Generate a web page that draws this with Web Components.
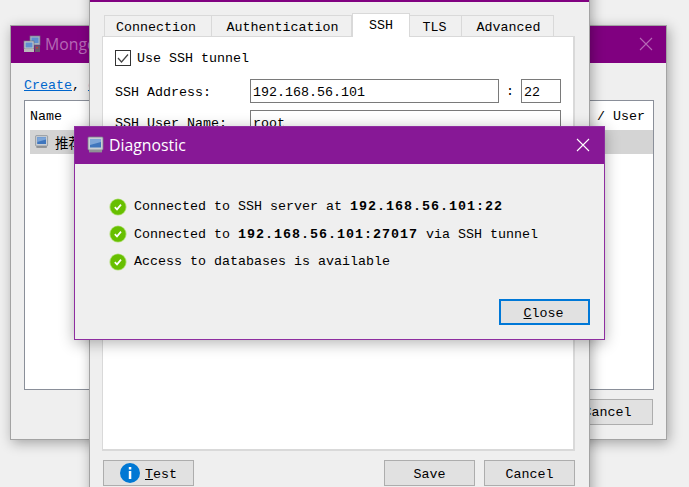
<!DOCTYPE html>
<html><head><meta charset="utf-8"><title>Diagnostic</title>
<style>
html,body{margin:0;height:100%;overflow:hidden;background:#f0f0f0}
body{font:13.33px "Liberation Mono","Noto Sans CJK SC",monospace;color:#000}
</style></head><body>
<x-desktop>
  <x-window style="--x:10px;--y:25px;--w:657px;--h:415px" inactive>
    <x-titlebar slot="title" inactive>
      <x-pc-icon slot="icon" kind="double"></x-pc-icon>Mongo
    </x-titlebar>
    <x-connections></x-connections>
  </x-window>

  <x-window style="--x:89px;--y:-36px;--w:501px;--h:540px" inactive>
    <x-titlebar slot="title"></x-titlebar>
    <x-settings></x-settings>
  </x-window>

  <x-window style="--x:74px;--y:126px;--w:531px;--h:214px" active>
    <x-titlebar slot="title" active>
      <x-pc-icon slot="icon"></x-pc-icon>Diagnostic
    </x-titlebar>
    <x-diagnostic></x-diagnostic>
  </x-window>
</x-desktop>

<script>
const single=`<rect x="1" y="1" width="15" height="13" rx="1" fill="#c9ced4" stroke="#7c8288" stroke-width=".8"/><rect x="3" y="3" width="11" height="8.5" fill="#3f76bd"/><path d="M3 3h11v3L3 9z" fill="#7ea6d8"/><rect x="2" y="14" width="13" height="2.4" fill="#8f9296"/>`;
const dbl=`<rect x="7" y="1" width="10" height="9" fill="#aab4c2" stroke="#6d7480" stroke-width=".7"/><rect x="8.5" y="2.5" width="7" height="5.5" fill="#5f8fd0"/><rect x="1" y="6" width="10" height="8" fill="#c5c9ce" stroke="#6d7480" stroke-width=".7"/><rect x="2.5" y="7.5" width="7" height="5" fill="#5f8fd0"/><rect x="1" y="14" width="10" height="3" fill="#b9babb"/><rect x="12" y="10.5" width="5" height="6.5" fill="#68586c"/><rect x="13" y="12" width="2" height="1.5" fill="#c23b3b"/>`;
function def(name, html){
  customElements.define(name, class extends HTMLElement{
    constructor(){super();this.attachShadow({mode:'open'}).innerHTML=html}
  });
}
def('x-desktop',`<style>:host{display:block;position:relative;width:689px;height:487px;overflow:hidden}</style><slot></slot>`);

def('x-window',`<style>
:host{position:absolute;left:var(--x);top:var(--y);width:var(--w);height:var(--h);box-sizing:border-box;
 display:flex;flex-direction:column;background:#efefef;border:1px solid #a3a3a3;box-shadow:2px 3px 12px rgba(0,0,0,.32)}
:host([active]){border-color:#8e2ea0;box-shadow:0 3px 14px rgba(0,0,0,.3)}
.c{flex:1;min-height:0;display:flex;flex-direction:column}
</style><slot name="title"></slot><div class="c"><slot></slot></div>`);

def('x-titlebar',`<style>
:host{display:flex;align-items:center;flex:none;height:37px;box-sizing:border-box;padding:0 14px 2px 12px;background:#800080;color:#fff;
 font:15.8px "Open Sans","Noto Sans",sans-serif}
:host([active]){background:#871896}
:host([inactive]){color:#b569b5;padding-right:13px}
.t{flex:1;padding-left:4px;white-space:nowrap;overflow:hidden}
svg{width:14px;height:14px;flex:none}
</style><slot name="icon"></slot><div class="t"><slot></slot></div><svg viewBox="0 0 14 14" fill="none" stroke="currentColor" stroke-width="1.1"><path d="M1 1 13 13M13 1 1 13"/></svg>`);

customElements.define('x-pc-icon',class extends HTMLElement{
  constructor(){super();this.attachShadow({mode:'open'}).innerHTML=`<style>:host{display:block;width:18px;height:18px;flex:none}svg{display:block}</style><svg width="18" height="18" viewBox="0 0 18 18"></svg>`}
  connectedCallback(){this.shadowRoot.querySelector('svg').innerHTML=this.getAttribute('kind')==='double'?dbl:single}
});

def('x-button',`<style>
:host{display:inline-flex;align-items:center;justify-content:center;box-sizing:border-box;width:91px;height:26px;flex:none;
 background:#e1e1e1;border:1px solid #adadad;font:13.33px "Liberation Mono",monospace;padding-top:2px;white-space:pre}
:host([focused]){border:2px solid #0078d7}
</style><slot></slot>`);

def('x-input',`<style>
:host{display:block;box-sizing:border-box;height:24px;background:#fff;border:1px solid #7a7a7a;padding:5px 2px 0;white-space:pre;overflow:hidden}
</style><slot></slot>`);

def('x-tab',`<style>
:host{display:flex;justify-content:center;align-items:center;box-sizing:border-box;height:21px;background:#f0f0f0;border:1px solid #d9d9d9;border-bottom:0;border-left:0;padding-top:2px}
:host([first]){border-left:1px solid #d9d9d9;padding-right:4px}
:host([selected]){height:24px;background:#fff;border-left:1px solid #d9d9d9;margin-bottom:-1px;position:relative;z-index:1;padding-top:0}
</style><slot></slot>`);

def('x-link',`<style>:host{color:#0066cc;text-decoration:underline}</style><slot></slot>`);

def('x-check-icon',`<style>:host{display:block;width:18px;height:18px;flex:none}svg{display:block}</style><svg width="18" height="18" viewBox="0 0 18 18"><circle cx="9" cy="9" r="8.6" fill="#b4e07c"/><circle cx="9" cy="9" r="7.7" fill="#67bf00"/><path d="M5.8 9.2 8 11.4 12 6.6" fill="none" stroke="#fff" stroke-width="1.7"/></svg>`);

def('x-info-icon',`<style>:host{display:block;width:20px;height:20px;flex:none;margin:-2px 5px 0 0}svg{display:block}</style><svg width="20" height="20" viewBox="0 0 20 20"><circle cx="10" cy="10" r="10" fill="#0078d4"/><rect x="8.8" y="8" width="2.5" height="8" fill="#fff"/><rect x="8.8" y="4" width="2.5" height="2.5" fill="#fff"/></svg>`);

def('x-connections',`<style>
:host{display:flex;flex-direction:column;flex:1;padding:14px 12px 14px 13px;min-height:0}
.top{height:23px;line-height:18px;white-space:pre}
.tbl{flex:1;background:#fff;border:1px solid #8a8f99;margin-bottom:9px;display:flex;flex-direction:column;padding-left:5px}
.h{height:29px;box-sizing:border-box;display:flex;justify-content:space-between;align-items:center;padding:2px 8px 0 0}
.r{height:24px;background:#d4d4d4;display:flex;align-items:center;padding-left:3px;gap:4px;font-family:"Noto Sans CJK SC",sans-serif;font-size:13.5px}
.r x-pc-icon{transform:scale(.8)}
.f{display:flex;justify-content:flex-end;padding-right:1px}
</style>
<div class="top"><x-link>Create</x-link>, <x-link>edit</x-link></div>
<div class="tbl"><div class="h"><span>Name</span><span>/ User</span></div>
<div class="r"><x-pc-icon></x-pc-icon><span>推荐</span></div></div>
<div class="f"><x-button style="padding-top:1px">Cancel</x-button></div>`);

def('x-settings',`<style>
:host{display:flex;flex-direction:column;flex:1;padding:11px 14px 0 12px;min-height:0}
.tabs{display:flex;align-items:flex-end;padding-left:2px;height:23px;position:relative}
.panel{height:415px;box-sizing:border-box;background:#fff;border:solid #d9d9d9;border-width:1px 2px 2px 1px;padding:12px 12px 0;display:flex;flex-direction:column}
.use{display:flex;align-items:center;gap:6px;height:18px}
.box{width:16px;height:16px;box-sizing:border-box;border:1px solid #333}
.box svg{display:block}
.row{display:flex;align-items:center;margin-top:12px}
.lab{width:135px;flex:none;padding-top:2px}
.colon{width:22px;text-align:center}
.row2{margin-top:7px}
.f{display:flex;align-items:flex-start;margin-top:9px;padding-left:1px}
.g{flex:1}
x-button+x-button{margin-left:9px}
</style>
<div class="tabs">
<x-tab first style="width:108px">Connection</x-tab><x-tab style="width:140px;padding-left:2px">Authentication</x-tab><x-tab selected style="width:58px">SSH</x-tab><x-tab style="width:52px;padding-right:2px">TLS</x-tab><x-tab style="width:92px;padding-left:2px">Advanced</x-tab>
</div>
<div class="panel">
<div class="use"><div class="box"><svg width="14" height="14" viewBox="0 0 14 14"><path d="M2 7 5.5 11 12 3.5" fill="none" stroke="#444" stroke-width="1.2"/></svg></div><span>Use SSH tunnel</span></div>
<div class="row"><span class="lab">SSH Address:</span><x-input style="width:249px">192.168.56.101</x-input><span class="colon">:</span><x-input style="width:40px">22</x-input></div>
<div class="row row2"><span class="lab">SSH User Name:</span><x-input style="width:311px">root</x-input></div>
</div>
<div class="f"><x-button><x-info-icon></x-info-icon><span><u>T</u>est</span></x-button><div class="g"></div><x-button>Save</x-button><x-button>Cancel</x-button></div>`);

def('x-diagnostic',`<style>
:host{display:flex;flex-direction:column;flex:1;padding:29px 14px 14px 34px}
.m{display:flex;align-items:center;gap:7px;height:27.5px;white-space:pre}
b{letter-spacing:1px}
.s{flex:1}
.f{display:flex;justify-content:flex-end}
.f span{padding-right:2px}
</style>
<div class="m"><x-check-icon></x-check-icon><span>Connected to SSH server at <b>192.168.56.101:22</b></span></div>
<div class="m"><x-check-icon></x-check-icon><span>Connected to <b>192.168.56.101:27017</b> via SSH tunnel</span></div>
<div class="m"><x-check-icon></x-check-icon><span>Access to databases is available</span></div>
<div class="s"></div>
<div class="f"><x-button focused><span><u>C</u>lose</span></x-button></div>`);
</script>
</body></html>
